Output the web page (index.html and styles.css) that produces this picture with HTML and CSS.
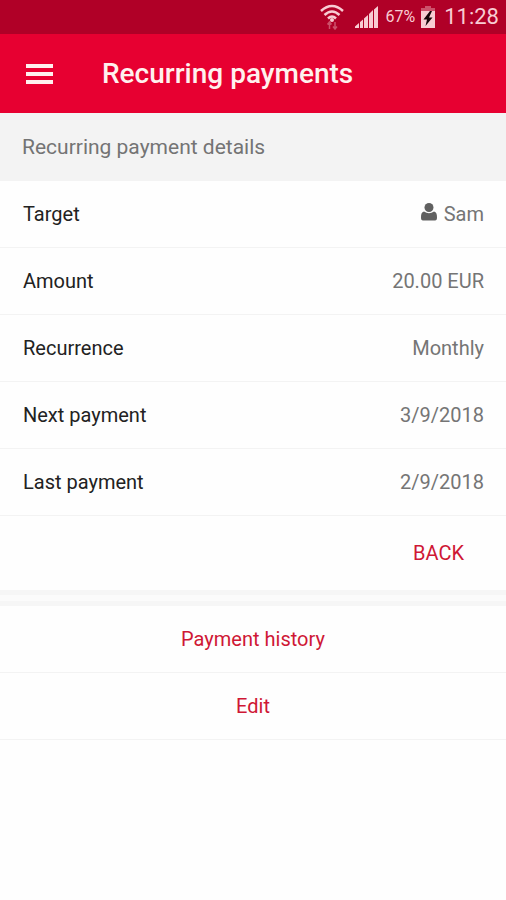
FILE: index.html
```html
<!DOCTYPE html>
<html lang="en">
<head>
    <meta charset="UTF-8">
    <meta name="viewport" content="width=device-width, initial-scale=1.0">
    <title>Recurring payments</title>
    <link rel="stylesheet" href="styles.css">
</head>
<body>
    <div class="status-bar">
        <svg class="wifi" width="24" height="26" viewBox="0 0 24 26" aria-hidden="true">
            <g fill="none" stroke="currentColor" stroke-width="2.5">
                <path d="M1 7Q12 -3 23 7"/>
                <path d="M4.500 11Q12 4 19.500 11"/>
                <path d="M8 14.500Q12 10.500 16 14.500"/>
            </g>
            <circle cx="12" cy="16" r="2" fill="currentColor"/>
            <path class="faded" d="M9.500 25V18.500M7.500 20.500L9.500 18L11.500 20.500M15 18V24.500M13 22.500L15 25L17 22.500" fill="none" stroke="currentColor" stroke-width="1.500"/>
        </svg>
        <svg class="signal" width="24" height="24" viewBox="0 0 24 24" fill="currentColor" aria-hidden="true">
            <path d="M0 23V21.500L4 18V23ZM5 23V17L8 14.500V23ZM9 23V13.500L13 10V23ZM14 23V9L18 5V23ZM19 23V4.500L23 1V23Z"/>
        </svg>
        <span class="battery-level">67%</span>
        <svg class="battery" width="14" height="22" viewBox="0 0 14 22" aria-hidden="true">
            <path class="faded" d="M4 0H10V2H14V6H0V2H4Z" fill="currentColor"/>
            <path d="M0 5H14V22H0Z" fill="currentColor"/>
            <path d="M9 5L2.500 13.500H6L4.500 20L11.500 11.500H8L11 5Z" fill="#160509"/>
        </svg>
        <span class="clock">11:28</span>
    </div>

    <header class="app-bar">
        <button class="menu-button" type="button" aria-label="Menu">
            <svg width="28" height="20" viewBox="0 0 28 20" fill="currentColor" aria-hidden="true">
                <path d="M0 0H27V4H0ZM0 8H27V12H0ZM0 16H27V20H0Z"/>
            </svg>
        </button>
        <h1>Recurring payments</h1>
    </header>

    <main>
        <h2>Recurring payment details</h2>
        <dl class="details">
            <div class="row">
                <dt>Target</dt>
                <dd>
                    <svg class="person" width="16" height="18" viewBox="0 0 16 18" fill="currentColor" aria-hidden="true">
                        <circle cx="8" cy="4.500" r="4.500"/>
                        <path d="M3 8.500Q8 12 13 8.500C15.500 9 16 11 16 14.500C16 16.500 15.500 17.500 14 17.500H2C.5 17.500 0 16.500 0 14.500C0 11 .5 9 3 8.500Z"/>
                    </svg>
                    Sam
                </dd>
            </div>
            <div class="row"><dt>Amount</dt><dd>20.00 EUR</dd></div>
            <div class="row"><dt>Recurrence</dt><dd>Monthly</dd></div>
            <div class="row"><dt>Next payment</dt><dd>3/9/2018</dd></div>
            <div class="row"><dt>Last payment</dt><dd>2/9/2018</dd></div>
        </dl>
        <div class="actions">
            <button class="back-button" type="button">BACK</button>
        </div>
        <div class="divider"></div>
        <nav class="links">
            <a href="#history">Payment history</a>
            <a href="#edit">Edit</a>
        </nav>
    </main>
</body>
</html>
```

FILE: styles.css
```css
* { box-sizing: border-box; }
body { margin: 0; font-family: Roboto, sans-serif; font-size: 20px; line-height: 24px; background: #fefefe; color: #222; }
h1, h2, dl, dd { margin: 0; }
button { border: 0; padding: 0; background: none; font: inherit; cursor: pointer; }
svg { display: block; flex: none; }

.status-bar { display: flex; align-items: center; justify-content: flex-end; height: 34px; padding: 0 7px 0 0; background: #b00027; color: #f8ccd3; }
.faded { opacity: 0.4; }
.signal { margin-left: 11px; }
.battery-level { margin-left: 7px; font-size: 16px; }
.battery { margin-left: 6px; }
.clock { margin-left: 9px; font-size: 22px; }

.app-bar { display: flex; align-items: center; height: 79px; padding: 0 26px; background: #e70031; color: #fff0ee; }
.menu-button { color: inherit; }
h1 { margin-left: 48px; font-size: 28px; line-height: 32px; font-weight: 500; }

h2 { padding: 22px; background: #f3f3f3; color: #747474; font-size: 21px; font-weight: 400; }
.row { display: flex; align-items: center; justify-content: space-between; min-height: 67px; padding: 0 22px 0 23px; border-bottom: 1px solid #f3f3f3; }
.row dd { display: flex; align-items: center; color: #757575; }
.person { margin: 0 7px 5px 0; color: #606060; }

.actions { display: flex; justify-content: flex-end; padding: 25px 42px; }
.back-button { color: #cf1735; }
.divider { height: 16px; border: solid #f6f6f6; border-width: 5px 0; background: #fbfbfb; }
.links a { display: block; padding: 21px 20px; border-bottom: 1px solid #f3f3f3; color: #cf1735; text-align: center; text-decoration: none; }
```
